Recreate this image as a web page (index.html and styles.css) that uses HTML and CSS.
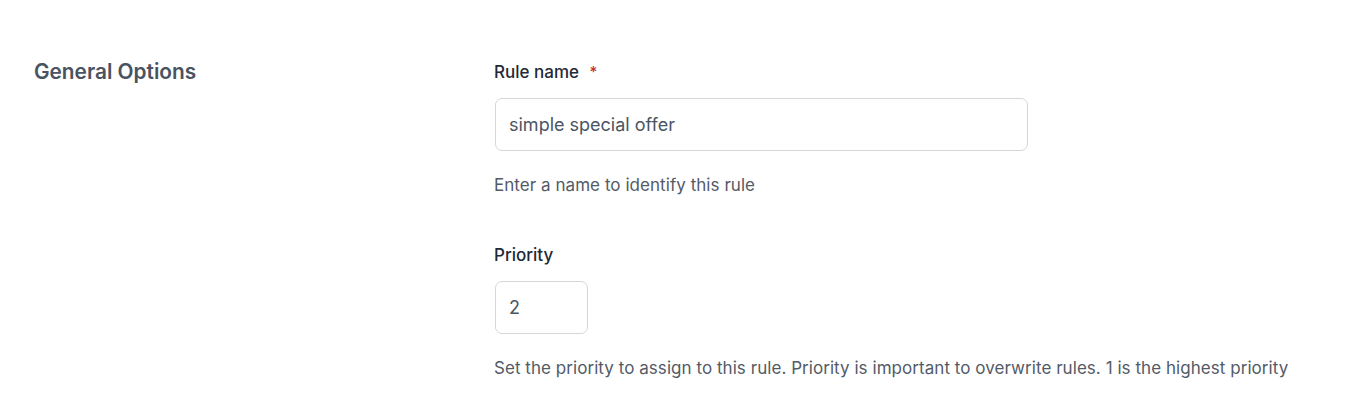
FILE: index.html
```html
<!DOCTYPE html>
<html>
<head>
<meta charset="utf-8">
<link rel="stylesheet" href="styles.css">
</head>
<body>
<div class="section">
  <div class="section-title">General Options</div>
  <div class="fields">
    <div class="field">
      <label class="label">Rule name <span class="req">*</span></label>
      <input class="input input-wide" type="text" value="simple special offer">
      <p class="help">Enter a name to identify this rule</p>
    </div>
    <div class="field">
      <label class="label">Priority</label>
      <input class="input input-small" type="text" value="2">
      <p class="help">Set the priority to assign to this rule. Priority is important to overwrite rules. 1 is the highest priority</p>
    </div>
  </div>
</div>
</body>
</html>
```
FILE: styles.css
```css
html, body {
  margin: 0;
  background: #ffffff;
  font-family: Inter, "Noto Sans", sans-serif;
}
.section {
  display: flex;
  padding: 60px 0 0 34px;
}
.section-title {
  width: 460px;
  flex: none;
  font-size: 20.8px;
  line-height: 24px;
  font-weight: 600;
  color: #4a5361;
}
.fields {
  display: flex;
  flex-direction: column;
  gap: 46px;
}
.field {
  display: flex;
  flex-direction: column;
  align-items: flex-start;
}
.label {
  font-size: 17px;
  font-weight: 500;
  color: #1f2937;
  line-height: 24px;
}
.req {
  color: #c53030;
  margin-left: 6px;
  font-size: 15px;
  vertical-align: 1px;
}
.input {
  margin: 14px 0 0 1px;
  height: 53px;
  box-sizing: border-box;
  border: 1px solid #d4d7dc;
  border-radius: 7px;
  padding: 0 13px;
  font-family: inherit;
  font-size: 18px;
  color: #4b5563;
  background: #fff;
  outline: none;
}
.input-wide { width: 533px; }
.input-small { width: 93px; }
.help {
  margin: 22px 0 0;
  font-size: 17px;
  line-height: 24px;
  letter-spacing: 0.05px;
  color: #535b67;
  white-space: nowrap;
}
```
